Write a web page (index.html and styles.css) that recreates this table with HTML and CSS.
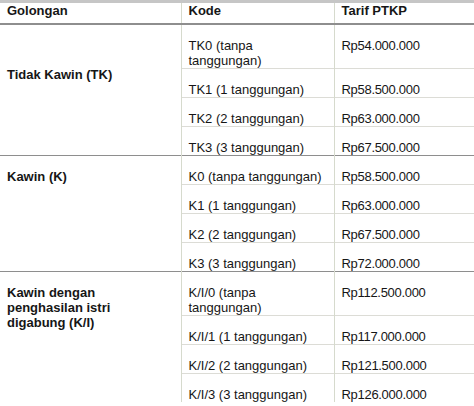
FILE: index.html
```html
<!DOCTYPE html>
<html lang="id">
<head>
<meta charset="utf-8">
<title>Tarif PTKP</title>
<link rel="stylesheet" href="styles.css">
</head>
<body>
<table class="ptkp">
  <colgroup>
    <col class="c-gol">
    <col class="c-kode">
    <col class="c-tarif">
  </colgroup>
  <thead>
    <tr>
      <th>Golongan</th>
      <th>Kode</th>
      <th>Tarif PTKP</th>
    </tr>
  </thead>
  <tbody class="group">
    <tr>
      <td rowspan="4" class="gol gol-mid">Tidak Kawin (TK)</td>
      <td>TK0 (tanpa<br>tanggungan)</td>
      <td class="tarif">Rp54.000.000</td>
    </tr>
    <tr><td>TK1 (1 tanggungan)</td><td class="tarif">Rp58.500.000</td></tr>
    <tr><td>TK2 (2 tanggungan)</td><td class="tarif">Rp63.000.000</td></tr>
    <tr><td>TK3 (3 tanggungan)</td><td class="tarif">Rp67.500.000</td></tr>
  </tbody>
  <tbody class="group">
    <tr>
      <td rowspan="4" class="gol">Kawin (K)</td>
      <td>K0 (tanpa tanggungan)</td>
      <td class="tarif">Rp58.500.000</td>
    </tr>
    <tr><td>K1 (1 tanggungan)</td><td class="tarif">Rp63.000.000</td></tr>
    <tr><td>K2 (2 tanggungan)</td><td class="tarif">Rp67.500.000</td></tr>
    <tr><td>K3 (3 tanggungan)</td><td class="tarif">Rp72.000.000</td></tr>
  </tbody>
  <tbody class="group">
    <tr>
      <td rowspan="4" class="gol">Kawin dengan<br>penghasilan istri<br>digabung (K/I)</td>
      <td>K/I/0 (tanpa<br>tanggungan)</td>
      <td class="tarif">Rp112.500.000</td>
    </tr>
    <tr><td>K/I/1 (1 tanggungan)</td><td class="tarif">Rp117.000.000</td></tr>
    <tr><td>K/I/2 (2 tanggungan)</td><td class="tarif">Rp121.500.000</td></tr>
    <tr><td>K/I/3 (3 tanggungan)</td><td class="tarif">Rp126.000.000</td></tr>
  </tbody>
</table>
</body>
</html>
```
FILE: styles.css
```css
html, body {
  margin: 0;
  padding: 0;
  background: #ffffff;
  overflow: hidden;
}

body {
  font-family: "Liberation Sans", Arial, sans-serif;
  font-size: 13px;
  line-height: 15px;
  color: #161616;
}

.ptkp {
  width: 474px;
  border-collapse: collapse;
  table-layout: fixed;
  border-top: 3px solid #c6c6c6;
}

.c-gol { width: 181px; }
.c-kode { width: 153px; }
.c-tarif { width: 140px; }

.ptkp th {
  text-align: left;
  font-weight: bold;
  padding: 0 7px 5px 7px;
  border-bottom: 2px solid #8e8e8e;
  border-left: 1px solid #d6dacd;
  vertical-align: top;
}

.ptkp th:first-child {
  border-left: none;
}

.ptkp td {
  padding: 13px 7px 0 7px;
  vertical-align: top;
  border-top: 1px solid #dcdcd6;
  border-left: 1px solid #d6dacd;
}

.ptkp td.gol {
  font-weight: bold;
  border-left: none;
}

.ptkp td.gol-mid {
  padding-top: 42px;
}

.ptkp .tarif {
  letter-spacing: -0.3px;
}

.ptkp tbody.group + tbody.group tr:first-child td {
  border-top: 1px solid #8e8e8e;
}
```
